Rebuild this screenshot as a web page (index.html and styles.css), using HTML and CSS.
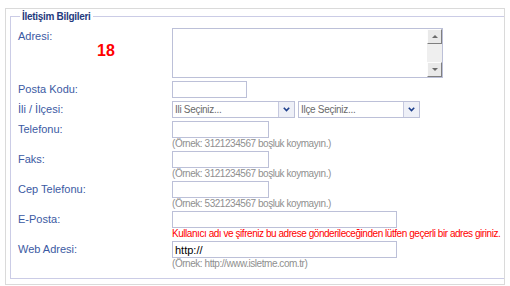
FILE: index.html
```html
<!DOCTYPE html>
<html lang="tr">
<head>
    <meta charset="UTF-8">
    <meta name="viewport" content="width=device-width, initial-scale=1.0">
    <title>İletişim Bilgileri</title>
    <link rel="stylesheet" href="styles.css">
</head>
<body>
    <div class="panel">
        <fieldset class="group">
            <legend>İletişim Bilgileri</legend>
            <div class="form">
                <div class="lbl">
                    <label for="adres">Adresi:</label>
                    <span class="count">18</span>
                </div>
                <div class="fld">
                    <div class="memo">
                        <textarea id="adres"></textarea>
                        <div class="vscroll">
                            <span class="sb-btn"><i class="tri up"></i></span>
                            <span class="sb-track"></span>
                            <span class="sb-btn"><i class="tri down"></i></span>
                        </div>
                    </div>
                </div>

                <div class="lbl"><label for="postaKodu">Posta Kodu:</label></div>
                <div class="fld"><input type="text" id="postaKodu" class="txt short"></div>

                <div class="lbl">İli / İlçesi:</div>
                <div class="fld picks">
                    <div class="pick">
                        <select id="il"><option>İli Seçiniz...</option></select>
                        <span class="pick-arrow"><svg width="7" height="5" viewBox="0 0 7 5"><polyline points="0.8,0.8 3.5,3.6 6.2,0.8" fill="none" stroke="#1d3f8c" stroke-width="1.6"/></svg></span>
                    </div>
                    <div class="pick">
                        <select id="ilce"><option>İlçe Seçiniz...</option></select>
                        <span class="pick-arrow"><svg width="7" height="5" viewBox="0 0 7 5"><polyline points="0.8,0.8 3.5,3.6 6.2,0.8" fill="none" stroke="#1d3f8c" stroke-width="1.6"/></svg></span>
                    </div>
                </div>

                <div class="lbl"><label for="telefon">Telefonu:</label></div>
                <div class="fld">
                    <input type="text" id="telefon" class="txt mid">
                    <div class="hint">(Örnek: 3121234567 boşluk koymayın.)</div>
                </div>

                <div class="lbl"><label for="faks">Faks:</label></div>
                <div class="fld">
                    <input type="text" id="faks" class="txt mid">
                    <div class="hint">(Örnek: 3121234567 boşluk koymayın.)</div>
                </div>

                <div class="lbl"><label for="cep">Cep Telefonu:</label></div>
                <div class="fld">
                    <input type="text" id="cep" class="txt mid">
                    <div class="hint">(Örnek: 5321234567 boşluk koymayın.)</div>
                </div>

                <div class="lbl"><label for="eposta">E-Posta:</label></div>
                <div class="fld">
                    <input type="text" id="eposta" class="txt wide">
                    <div class="hint warn">Kullanıcı adı ve şifreniz bu adrese gönderileceğinden lütfen geçerli bir adres giriniz.</div>
                </div>

                <div class="lbl"><label for="web">Web Adresi:</label></div>
                <div class="fld">
                    <input type="text" id="web" class="txt wide" value="http://">
                    <div class="hint">(Örnek: http://www.isletme.com.tr)</div>
                </div>
            </div>
        </fieldset>
    </div>
</body>
</html>
```

FILE: styles.css
```css
body {
    margin: 0;
    font-family: "Liberation Sans", Arial, sans-serif;
    background-color: #fff;
}
.panel {
    margin: 8px 5px 0 5px;
    border: 1px solid #dadada;
    padding: 1px 0 5px 4px;
}
.group {
    margin: 0;
    border: 1px solid #cbcce6;
    border-right: none;
    padding: 5px 0 10px 7px;
}
.group legend {
    margin-left: 2px;
    padding: 0 2px;
    font-size: 10px;
    font-weight: bold;
    letter-spacing: -0.3px;
    line-height: 13px;
    color: #1f3a7d;
}
.form {
    display: grid;
    grid-template-columns: 154px auto;
    row-gap: 3px;
    align-items: start;
}
.lbl {
    font-size: 11px;
    line-height: 17px;
    color: #3b5aa3;
}
.count {
    display: block;
    margin: -2px 0 0 79px;
    font-size: 16px;
    font-weight: bold;
    line-height: 15px;
    color: #f00;
}
.memo {
    display: flex;
    width: 271px;
    height: 50px;
    box-sizing: border-box;
    border: 1px solid #bcc0d8;
}
.memo textarea {
    flex: 1;
    border: none;
    resize: none;
    outline: none;
    padding: 2px;
    font-family: inherit;
    font-size: 11px;
}
.vscroll {
    display: flex;
    flex-direction: column;
    width: 15px;
    background-color: #efefef;
}
.sb-btn {
    display: flex;
    align-items: center;
    justify-content: center;
    height: 15px;
    box-sizing: border-box;
    background-color: #e9e9e9;
    border: 1px solid;
    border-color: #fdfdfd #7f7f7f #7f7f7f #fdfdfd;
}
.sb-track {
    flex: 1;
}
.tri {
    width: 0;
    height: 0;
    border-left: 3px solid transparent;
    border-right: 3px solid transparent;
}
.tri.up {
    border-bottom: 3px solid #6b6b6b;
}
.tri.down {
    border-top: 3px solid #6b6b6b;
}
.txt {
    position: relative;
    display: block;
    height: 17px;
    box-sizing: border-box;
    margin: 0;
    padding: 0 2px;
    border: 1px solid #bcc0d8;
    font-family: inherit;
    font-size: 11px;
    color: #000;
}
.txt.short {
    width: 75px;
}
.txt.mid {
    width: 97px;
}
.txt.wide {
    width: 225px;
}
.picks {
    display: flex;
    gap: 3px;
}
.pick {
    display: flex;
    width: 123px;
    height: 17px;
    box-sizing: border-box;
    border: 1px solid #bcc0d8;
}
.pick + .pick {
    width: 122px;
}
.pick select {
    flex: 1;
    min-width: 0;
    appearance: none;
    border: none;
    outline: none;
    margin: 0;
    padding: 0 2px;
    background: #fff;
    font-family: inherit;
    font-size: 10px;
    letter-spacing: -0.3px;
    color: #6a6a6a;
}
.pick-arrow {
    display: flex;
    align-items: center;
    justify-content: center;
    width: 15px;
    border-left: 1px solid #c6c9df;
    background-color: #eef0f7;
}
.hint {
    position: relative;
    z-index: 1;
    margin: 0 0 -2px;
    font-size: 10px;
    letter-spacing: -0.45px;
    line-height: 12px;
    white-space: nowrap;
    color: #8f8f8f;
}
.hint.warn {
    color: #f00;
}
```
